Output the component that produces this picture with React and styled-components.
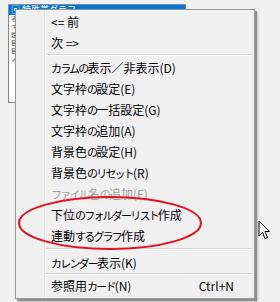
import React from 'react';
import styled, { createGlobalStyle } from 'styled-components';

const GlobalStyle = createGlobalStyle`
  html, body {
    margin: 0;
    padding: 0;
    background: #f0f0f0;
  }
  body {
    font-family: "Noto Sans CJK JP", "Noto Sans", sans-serif;
  }
`;

const Screen = styled.div`
  position: relative;
  width: 280px;
  height: 302px;
  overflow: hidden;
  background: #f0f0f0;
  padding: 4px 0 0 8px;
  box-sizing: border-box;
`;

// リストボックス（メニューの後ろ）
const ListBox = styled.div`
  width: 178px;
  height: 99px;
  border: 1px solid #828790;
  background: #fff;
  box-sizing: border-box;
  overflow: hidden;
  display: flex;
  flex-direction: column;
`;

const ListRow = styled.div`
  flex: none;
  height: ${({ h }) => h || 8}px;
  line-height: ${({ h }) => h || 8}px;
  font-size: ${({ h }) => (h ? 9 : 6)}px;
  padding-left: 2px;
  white-space: nowrap;
  overflow: hidden;
  color: ${({ selected }) => (selected ? '#fff' : '#333')};
  background: ${({ selected }) => (selected ? '#0078d7' : 'transparent')};
`;

// ポップアップメニュー
const Menu = styled.div`
  position: absolute;
  left: 15px;
  top: 9px;
  width: 240px;
  box-sizing: border-box;
  border: 1px solid #979797;
  padding: 1px 2px 2px;
  background:
    linear-gradient(to right, transparent 28px, #e2e3e3 28px, #e2e3e3 29px, #fff 29px, #fff 30px, transparent 30px),
    #f0f0f0;
  box-shadow: 2px 2px 1px rgba(0, 0, 0, 0.3), 3px 3px 2px rgba(0, 0, 0, 0.15);
  display: flex;
  flex-direction: column;
`;

const Item = styled.div`
  height: 21px;
  display: flex;
  align-items: center;
  justify-content: space-between;
  padding: 0 18px 0 33px;
  font-size: 12px;
  white-space: nowrap;
  color: ${({ disabled }) => (disabled ? '#a0a0a0' : '#000')};
`;

// メイリオUIのかなは幅が狭い
const Kana = styled.span`
  font-size: 11px;
  letter-spacing: -1.8px;
`;

const Shortcut = styled.span`
  letter-spacing: 0;
`;

const Separator = styled.div`
  height: ${({ h }) => h}px;
  margin-left: 28px;
  display: flex;
  align-items: center;

  &::before {
    content: '';
    flex: 1;
    height: 1px;
    background: #d7d7d7;
    border-bottom: 1px solid #fff;
  }
`;

const Ellipse = styled.svg`
  position: absolute;
  left: 17px;
  top: 195px;
  overflow: visible;
`;

const Cursor = styled.svg`
  position: absolute;
  left: 258px;
  top: 220px;
`;

const items = [
  { label: '<= 前' },
  { label: '次 =>' },
  { sep: 4 },
  { label: 'カラムの表示／非表示(D)' },
  { label: '文字枠の設定(E)' },
  { label: '文字枠の一括設定(G)' },
  { label: '文字枠の追加(A)' },
  { label: '背景色の設定(H)' },
  { label: '背景色のリセット(R)' },
  { label: 'ファイル名の追加(F)', disabled: true },
  { label: '下位のフォルダーリスト作成' },
  { label: '連動するグラフ作成' },
  { sep: 6 },
  { label: 'カレンダー表示(K)' },
  { sep: 2 },
  { label: '参照用カード(N)', shortcut: 'Ctrl+N' },
];

const listRows = ['そ', 'ス', '説', '目', '目', 'ノ', '', '', '', ''];

const renderLabel = (text) =>
  text.split(/([\u3041-\u309F\u30A0-\u30FF]+)/).map((part, i) =>
    i % 2 === 1 ? <Kana key={i}>{part}</Kana> : part
  );

export default function App() {
  return (
    <>
      <GlobalStyle />
      <Screen>
        <ListBox>
          <ListRow selected h={10}>▣ 特殊帯グラフ</ListRow>
          {listRows.map((t, i) => (
            <ListRow key={i}>{t}</ListRow>
          ))}
        </ListBox>

        <Menu>
          {items.map((it, i) =>
            it.sep ? (
              <Separator key={i} h={it.sep} />
            ) : (
              <Item key={i} disabled={it.disabled}>
                <span>{renderLabel(it.label)}</span>
                {it.shortcut && <Shortcut>{it.shortcut}</Shortcut>}
              </Item>
            )
          )}
        </Menu>

        <Ellipse width="186" height="56" viewBox="0 0 186 56">
          <ellipse cx="93" cy="28" rx="91" ry="26" fill="none" stroke="#e8101c" strokeWidth="2" />
        </Ellipse>

        <Cursor width="14" height="21" viewBox="0 0 14 21">
          <path
            d="M1 1 L1 16 L4.5 12.5 L7 18.5 L9.5 17.5 L7 11.5 L11.5 11.5 Z"
            fill="#fff"
            stroke="#000"
            strokeWidth="1"
            strokeLinejoin="miter"
          />
        </Cursor>
      </Screen>
    </>
  );
}
